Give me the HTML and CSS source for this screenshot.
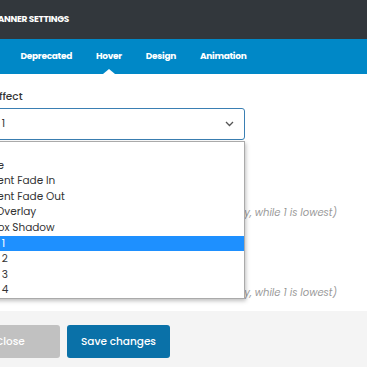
FILE: index.html
```html
<!DOCTYPE html>
<html lang="en">
<head>
    <meta charset="UTF-8">
    <meta name="viewport" content="width=device-width, initial-scale=1.0">
    <title>Banner Settings</title>
    <link rel="stylesheet" href="styles.css">
</head>
<body>
    <div class="modal">
        <div class="modal-header">
            <h2>Banner Settings</h2>
        </div>
        <nav class="tabs">
            <a class="tab">General</a>
            <a class="tab">Deprecated</a>
            <a class="tab active">Hover</a>
            <a class="tab">Design</a>
            <a class="tab">Animation</a>
        </nav>
        <div class="modal-body">
            <div class="field">
                <label>Hover Effect</label>
                <div class="select-wrap">
                    <div class="select">
                        <span>Style 1</span>
                        <svg width="9" height="6" viewBox="0 0 9 6"><path d="M1 1l3.5 3.5L8 1" fill="none" stroke="#555" stroke-width="1.3"/></svg>
                    </div>
                    <ul class="dropdown">
                        <li>&nbsp;</li>
                        <li>Shake</li>
                        <li>Content Fade In</li>
                        <li>Content Fade Out</li>
                        <li>Add Overlay</li>
                        <li>Set Box Shadow</li>
                        <li class="sub selected">Style 1</li>
                        <li class="sub">Style 2</li>
                        <li class="sub">Style 3</li>
                        <li class="sub">Style 4</li>
                    </ul>
                </div>
            </div>
            <div class="field">
                <label>Hover Priority</label>
                <input type="text" value="5">
                <p class="help">(10 is highest priority, while 1 is lowest)</p>
            </div>
            <div class="field">
                <label>Animation Priority</label>
                <input type="text" value="5">
                <p class="help">(10 is highest priority, while 1 is lowest)</p>
            </div>
        </div>
        <div class="modal-footer">
            <button class="btn btn-close">Close</button>
            <button class="btn btn-save">Save changes</button>
        </div>
    </div>
</body>
</html>
```

FILE: styles.css
```css
body {
    margin: 0;
    overflow: hidden;
    font-family: 'Poppins', 'Open Sans', sans-serif;
    color: #333;
}
.modal {
    margin-left: -60px;
    width: 460px;
    background: #fff;
}
.modal-header {
    height: 39px;
    background: #32373c;
    display: flex;
    align-items: center;
    padding-left: 52px;
}
.modal-header h2 {
    margin: 0;
    color: #fff;
    font-size: 9px;
    font-weight: 700;
    text-transform: uppercase;
    letter-spacing: -0.3px;
}
.tabs {
    height: 35px;
    background: #0088c7;
    display: flex;
    align-items: center;
    gap: 24px;
    padding-left: 22px;
}
.tab {
    position: relative;
    color: #fff;
    font-size: 9px;
    font-weight: 700;
    letter-spacing: -0.3px;
    line-height: 35px;
}
.tab.active::after {
    content: '';
    position: absolute;
    left: 50%;
    bottom: 0;
    margin-left: -6px;
    border-left: 6px solid transparent;
    border-right: 6px solid transparent;
    border-bottom: 5px solid #fff;
}
.modal-body {
    padding: 15px 20px 11px;
}
.field {
    margin-bottom: 10px;
}
.field:last-child {
    margin-bottom: 0;
}
label {
    display: block;
    font-size: 10.5px;
    font-weight: 500;
    line-height: 16px;
    margin-bottom: 3px;
}
.select-wrap {
    position: relative;
    width: 285px;
    margin-bottom: 5px;
}
.select {
    height: 32px;
    box-sizing: border-box;
    border: 1px solid #3a7fb3;
    border-radius: 3px;
    padding: 0 10px 0 13px;
    display: flex;
    align-items: center;
    justify-content: space-between;
    font-size: 10.5px;
}
.dropdown {
    position: absolute;
    top: 33px;
    left: 0;
    right: 0;
    z-index: 2;
    margin: 0;
    padding: 0;
    list-style: none;
    background: #fff;
    border: 1px solid #aaa;
    box-shadow: 1px 2px 4px rgba(0, 0, 0, 0.25);
}
.dropdown li {
    height: 15.6px;
    line-height: 15.6px;
    padding-left: 11px;
    font-size: 10.5px;
    white-space: nowrap;
}
.dropdown li.sub {
    padding-left: 13px;
}
.dropdown li.selected {
    background: #1e90ff;
    color: #fff;
}
input {
    display: block;
    width: 285px;
    height: 32px;
    box-sizing: border-box;
    border: 1px solid #ddd;
    border-radius: 3px;
    padding: 0 11px;
    font-family: inherit;
}
.help {
    width: 377px;
    margin: 5px 0 0;
    font-size: 10px;
    font-style: italic;
    color: #999;
    line-height: 14px;
    white-space: nowrap;
    text-align: right;
}
.modal-footer {
    background: #f4f4f4;
    padding: 14px 20px;
    display: flex;
    gap: 7px;
}
.btn {
    height: 33px;
    border: none;
    border-radius: 3px;
    color: #fff;
    font-family: inherit;
    font-size: 10.5px;
    font-weight: 500;
    cursor: pointer;
}
.btn-close {
    width: 100px;
    background: #c1c1c1;
}
.btn-save {
    width: 103px;
    background: #0a71a8;
}
```
